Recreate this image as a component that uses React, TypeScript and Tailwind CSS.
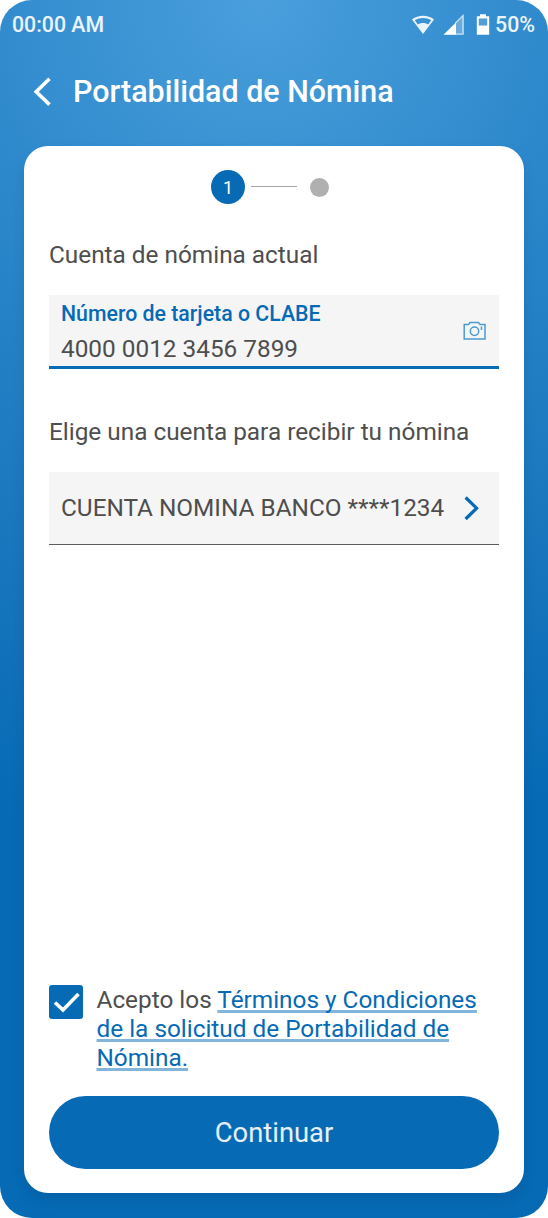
import React, { useState } from "react";

const StatusBar = () => (
  <div className="flex h-[50px] items-center justify-between pl-3 pr-[13px] text-[21.3px] font-medium leading-none text-white/90">
    <span>00:00 AM</span>
    <div className="flex items-center">
      {/* Wifi */}
      <svg className="h-[22px] w-6" viewBox="0 0 24 22" fill="none">
        <path d="M1 5.5C7 .6 17 .6 23 5.5L12 20Z M3.8 6.3L6.8 10.6C10 8.6 14 8.6 17.2 10.6L20.2 6.3C15.5 3.2 8.5 3.2 3.8 6.3Z" fill="white" fillRule="evenodd" fillOpacity=".9" />
      </svg>
      {/* Signal */}
      <svg className="ml-2 h-[22px] w-[22px]" viewBox="0 0 22 22">
        <path d="M20.8 .8V20.8H.5Z" fill="white" fillOpacity=".25" />
        <path d="M13 8.4V20.8H.5Z" fill="white" />
        <path d="M12.5 9L20 1.6V20.1H13" fill="none" stroke="white" strokeOpacity=".65" strokeWidth="1.4" />
      </svg>
      {/* Battery */}
      <svg className="ml-[11px] h-[22px] w-[14px]" viewBox="0 0 14 22">
        <path d="M4 .2H10V2.2H13.2V20.8H.8V2.2H4Z M2.8 4.4V11.6H11.2V4.4Z" fill="white" fillRule="evenodd" />
        <path d="M2.8 4.4H11.2V11.6H2.8Z" fill="white" fillOpacity=".15" />
      </svg>
      <span className="ml-[5px]">50%</span>
    </div>
  </div>
);

const Stepper = () => (
  <div className="flex h-[34px] items-center pl-[162px]">
    <div className="flex h-[34px] w-[34px] items-center justify-center rounded-full bg-[#066ab5] text-[18px] text-white">
      1
    </div>
    <div className="-mt-px ml-[6px] h-px w-[46px] bg-[#a6a6a6]" />
    <div className="ml-[13px] h-[19px] w-[19px] rounded-full bg-[#b0b0b0]" />
  </div>
);

const App = () => {
  const [accepted, setAccepted] = useState(true);

  return (
    <div className="h-[1218px] w-[548px] bg-white font-['Roboto',sans-serif] text-[24.35px] leading-[29px] text-[#4e4e4e]">
      <div className="flex h-full flex-col rounded-[32px] bg-[radial-gradient(circle_850px_at_260px_0px,#4a9fdc_0%,#2d88cb_36%,#2480c5_50%,#1a78be_67%,#066ab5_100%)]">
        <StatusBar />

        {/* Header */}
        <header className="flex h-[83px] items-center pl-[33px] text-white">
          <svg className="h-[30px] w-[19px]" viewBox="0 0 19 30" fill="none">
            <path d="M16.5 1.8L3.2 14.7L16.5 27.6" stroke="white" strokeWidth="3.6" />
          </svg>
          <h1 className="ml-[21px] text-[30.45px] font-medium">Portabilidad de Nómina</h1>
        </header>

        <main className="mx-6 mt-[13px] flex h-[1047px] flex-col rounded-[24px] bg-white px-[25px] pb-6 pt-6 shadow-[0_6px_12px_rgba(0,40,80,0.14)]">
          <Stepper />

          <h2 className="mt-[36px]">Cuenta de nómina actual</h2>

          {/* Card number */}
          <div className="mt-[26px] flex h-[74px] items-center justify-between border-b-3 border-[#066ab5] bg-[#f5f5f5] pl-3 pr-[13px]">
            <div className="pt-[3px]">
              <div className="text-[21.3px] font-medium leading-[34px] text-[#066ab5]">
                Número de tarjeta o CLABE
              </div>
              <div className="leading-[36px]">4000 0012 3456 7899</div>
            </div>
            <svg className="mt-px h-5 w-[23px]" viewBox="0 0 23 20" fill="none" stroke="#4c9bd3" strokeWidth="1.5">
              <path d="M1.2 3.5H5.5L7 1.5H15.5L17 3.5H22V18H1.2Z" />
              <circle cx="11.5" cy="10.3" r="4.2" />
              <path d="M18.5 5.5V9" />
            </svg>
          </div>

          <h2 className="mt-[48px]">Elige una cuenta para recibir tu nómina</h2>

          {/* Account selector */}
          <button className="mt-[26px] flex h-[73px] items-center justify-between border-b border-[#5c5c5c] bg-[#f5f5f5] pl-3 pr-[19px]">
            <span className="-mt-0.5">CUENTA NOMINA BANCO ****1234</span>
            <svg className="h-[25px] w-4" viewBox="0 0 16 25" fill="none">
              <path d="M1.6 1.5L12.6 12.2L1.6 23" stroke="#066ab5" strokeWidth="3.2" />
            </svg>
          </button>

          {/* Terms */}
          <div className="mt-auto flex items-start">
            <button
              onClick={() => setAccepted(!accepted)}
              className="flex h-[34px] w-[34px] items-center justify-center rounded-[3px] bg-[#066ab5]"
            >
              {accepted && (
                <svg className="h-[34px] w-[34px]" viewBox="0 0 34 34" fill="none">
                  <path d="M6 17.5L14 25L29.5 9" stroke="white" strokeWidth="3.6" />
                </svg>
              )}
            </button>
            <p className="ml-[13.5px]">
              Acepto los{" "}
              <span className="text-[#066ab5] underline decoration-[#83b5da] decoration-[2.5px] underline-offset-[2px] [text-decoration-skip-ink:none]">
                Términos y Condiciones
                <br />
                de la solicitud de Portabilidad de
                <br />
                Nómina.
              </span>
            </p>
          </div>

          <button className="mt-6 h-[73px] shrink-0 rounded-full bg-[#066ab5] pt-px text-[27.4px] text-white/90">
            Continuar
          </button>
        </main>
      </div>
    </div>
  );
};

export default App;
